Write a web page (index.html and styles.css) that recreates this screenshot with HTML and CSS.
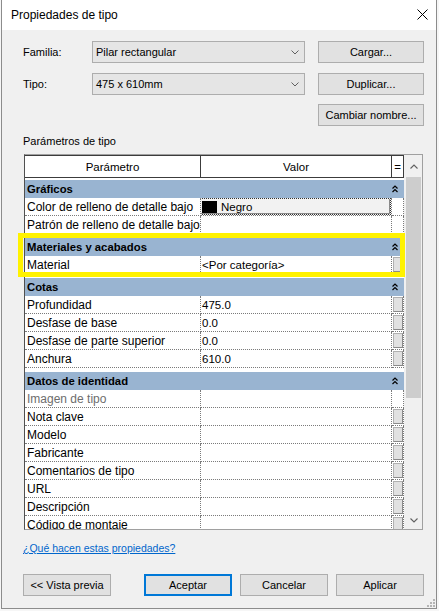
FILE: index.html
```html
<!DOCTYPE html>
<html lang="es">
<head>
<meta charset="utf-8">
<title>Propiedades de tipo</title>
<link rel="stylesheet" href="styles.css">
</head>
<body>
<div class="dialog">
  <div class="titlebar">
    <span class="title">Propiedades de tipo</span>
    <svg class="close" width="11" height="11" viewBox="0 0 11 11"><path d="M0.5 0.5L10.5 10.5M10.5 0.5L0.5 10.5" stroke="#000" stroke-width="1" fill="none"/></svg>
  </div>
  <div class="content">
    <div class="form">
      <div class="label">Familia:</div>
      <div class="combo"><span>Pilar rectangular</span><svg width="8" height="5" viewBox="0 0 8 5"><path d="M0.5 0.5L4 4L7.5 0.5" fill="none" stroke="#606060"/></svg></div>
      <div class="btn">Cargar...</div>
      <div class="label">Tipo:</div>
      <div class="combo"><span>475 x 610mm</span><svg width="8" height="5" viewBox="0 0 8 5"><path d="M0.5 0.5L4 4L7.5 0.5" fill="none" stroke="#606060"/></svg></div>
      <div class="btn">Duplicar...</div>
      <div class="btn third">Cambiar nombre...</div>
    </div>
    <div class="section-label">Parámetros de tipo</div>
    <div class="frame">
      <div class="grid">
        <div class="hdr"><div>Parámetro</div><div>Valor</div><div>=</div></div>

        <div class="group first"><span>Gráficos</span><svg width="6" height="8" viewBox="0 0 6 8"><path d="M0.5 3.5L3 1L5.5 3.5M0.5 7L3 4.5L5.5 7" fill="none" stroke="#000" stroke-width="1.2"/></svg></div>
        <div class="row"><div class="name">Color de relleno de detalle bajo</div><div class="val colorcell"><div class="colorbox"><span class="swatch"></span><span>Negro</span></div></div><div class="eq"></div></div>
        <div class="row"><div class="name">Patrón de relleno de detalle bajo</div><div class="val"></div><div class="eq"></div></div>

        <div class="group"><span>Materiales y acabados</span><svg width="6" height="8" viewBox="0 0 6 8"><path d="M0.5 3.5L3 1L5.5 3.5M0.5 7L3 4.5L5.5 7" fill="none" stroke="#000" stroke-width="1.2"/></svg></div>
        <div class="row"><div class="name">Material</div><div class="val">&lt;Por categoría&gt;</div><div class="eq"><span class="eqbtn"></span></div></div>

        <div class="group"><span>Cotas</span><svg width="6" height="8" viewBox="0 0 6 8"><path d="M0.5 3.5L3 1L5.5 3.5M0.5 7L3 4.5L5.5 7" fill="none" stroke="#000" stroke-width="1.2"/></svg></div>
        <div class="row"><div class="name">Profundidad</div><div class="val">475.0</div><div class="eq"><span class="eqbtn"></span></div></div>
        <div class="row"><div class="name">Desfase de base</div><div class="val">0.0</div><div class="eq"><span class="eqbtn"></span></div></div>
        <div class="row"><div class="name">Desfase de parte superior</div><div class="val">0.0</div><div class="eq"><span class="eqbtn"></span></div></div>
        <div class="row"><div class="name">Anchura</div><div class="val">610.0</div><div class="eq"><span class="eqbtn"></span></div></div>

        <div class="group"><span>Datos de identidad</span><svg width="6" height="8" viewBox="0 0 6 8"><path d="M0.5 3.5L3 1L5.5 3.5M0.5 7L3 4.5L5.5 7" fill="none" stroke="#000" stroke-width="1.2"/></svg></div>
        <div class="row"><div class="name disabled">Imagen de tipo</div><div class="val"></div><div class="eq"></div></div>
        <div class="row"><div class="name">Nota clave</div><div class="val"></div><div class="eq"><span class="eqbtn"></span></div></div>
        <div class="row"><div class="name">Modelo</div><div class="val"></div><div class="eq"><span class="eqbtn"></span></div></div>
        <div class="row"><div class="name">Fabricante</div><div class="val"></div><div class="eq"><span class="eqbtn"></span></div></div>
        <div class="row"><div class="name">Comentarios de tipo</div><div class="val"></div><div class="eq"><span class="eqbtn"></span></div></div>
        <div class="row"><div class="name">URL</div><div class="val"></div><div class="eq"><span class="eqbtn"></span></div></div>
        <div class="row"><div class="name">Descripción</div><div class="val"></div><div class="eq"><span class="eqbtn"></span></div></div>
        <div class="row"><div class="name">Código de montaje</div><div class="val"></div><div class="eq"><span class="eqbtn"></span></div></div>
      </div>
      <div class="scroll">
        <div class="arrow up"><svg width="8" height="5" viewBox="0 0 8 5"><path d="M0.5 4.5L4 1L7.5 4.5" fill="none" stroke="#606060" stroke-width="1.1"/></svg></div>
        <div class="thumb"></div>
        <div class="track"></div>
        <div class="arrow down"><svg width="8" height="5" viewBox="0 0 8 5"><path d="M0.5 0.5L4 4L7.5 0.5" fill="none" stroke="#606060" stroke-width="1.1"/></svg></div>
      </div>
    </div>
    <a class="help">¿Qué hacen estas propiedades?</a>
    <div class="buttons">
      <div class="btn wide first-btn">&lt;&lt; Vista previa</div>
      <div class="btn-group">
        <div class="btn wide default">Aceptar</div>
        <div class="btn wide">Cancelar</div>
        <div class="btn wide">Aplicar</div>
      </div>
    </div>
  </div>
  <div class="highlight"></div>
  <svg class="grip" width="8" height="8" viewBox="0 0 8 8">
    <rect x="6" y="0" width="2" height="2" fill="#b4b4b4"/>
    <rect x="3" y="3" width="2" height="2" fill="#b4b4b4"/>
    <rect x="6" y="3" width="2" height="2" fill="#b4b4b4"/>
    <rect x="0" y="6" width="2" height="2" fill="#b4b4b4"/>
    <rect x="3" y="6" width="2" height="2" fill="#b4b4b4"/>
    <rect x="6" y="6" width="2" height="2" fill="#b4b4b4"/>
  </svg>
</div>
</body>
</html>
```
FILE: styles.css
```css
* { box-sizing: border-box; }
html, body { margin: 0; padding: 0; }
body {
  width: 439px;
  height: 611px;
  overflow: hidden;
  background: #f6f6f6;
  font-family: "Liberation Sans", Arial, sans-serif;
  color: #000;
}
.dialog {
  position: relative;
  margin-left: 1px;
  width: 436px;
  height: 609px;
  border: 1px solid #8c8c8c;
  border-top: none;
  background: #f0f0f0;
  display: flex;
  flex-direction: column;
}
.titlebar {
  height: 30px;
  flex: none;
  background: #fff;
  display: flex;
  align-items: center;
  justify-content: space-between;
  padding: 0 8px 1px 9px;
}
.title { font-size: 12px; }
.content {
  flex: 1;
  padding: 11px 12px 0 20px;
  display: flex;
  flex-direction: column;
}
.form {
  display: grid;
  grid-template-columns: 57px 213px 106px;
  grid-template-rows: 22px 22px 22px;
  column-gap: 13px;
  row-gap: 10px;
}
.label {
  font-size: 11px;
  display: flex;
  align-items: center;
  padding-left: 1px;
}
.combo {
  border: 1px solid #adadad;
  background: #e5e5e5;
  display: flex;
  align-items: center;
  justify-content: space-between;
  padding: 0 5px 0 3px;
  font-size: 11px;
}
.btn {
  border: 1px solid #adadad;
  background: #e1e1e1;
  font-size: 11px;
  display: flex;
  align-items: center;
  justify-content: center;
  height: 22px;
}
.third { grid-column: 3; margin-top: -1px; }
.section-label {
  font-size: 11px;
  line-height: 14px;
  margin-top: 7px;
  padding-left: 1px;
}
.frame {
  margin-top: 6px;
  margin-left: 2px;
  width: 399px;
  height: 376px;
  border: 1px solid #a0a0a0;
  border-left-color: #505050;
  display: flex;
  flex: none;
}
.grid {
  width: 379px;
  height: 100%;
  overflow: hidden;
  background: #fff;
}
.hdr {
  display: grid;
  grid-template-columns: 176px 191px 12px;
  height: 23px;
  border-top: 1px solid #3c3c3c;
  border-bottom: 1px solid #3c3c3c;
  background: #fff;
  font-size: 11.5px;
}
.hdr > div {
  border-right: 1px solid #3c3c3c;
  display: flex;
  align-items: center;
  justify-content: center;
}
.group {
  margin-top: 4px;
  height: 18px;
  background: #99b4d1;
  display: flex;
  align-items: center;
  justify-content: space-between;
  padding: 0 6px 0 2px;
  font-weight: bold;
  font-size: 11.3px;
}
.group.first { margin-top: 2px; }
.row {
  display: grid;
  grid-template-columns: 176px 191px 12px;
  height: 18px;
}
.row > div {
  border-bottom: 1px dotted #7a7a7a;
  border-right: 1px dotted #7a7a7a;
  display: flex;
  align-items: center;
  overflow: hidden;
  white-space: nowrap;
}
.name { padding-left: 2px; font-size: 12px; }
.name.disabled { color: #6d6d6d; }
.val { padding-left: 1px; font-size: 11.5px; }
.val.colorcell { padding-left: 0; }
.colorbox {
  flex: 1;
  height: 100%;
  margin-left: -1px;
  border: 1px dotted #333;
  background: #f2f2f2;
  box-shadow: inset -1px -1px 0 #8a8a8a;
  display: flex;
  align-items: center;
}
.swatch {
  width: 15px;
  height: 12px;
  margin-left: 1px;
  margin-right: 4px;
  background: #000;
}
.eqbtn {
  margin-left: 1px;
  width: 10px;
  height: 15px;
  background: #e1e1e1;
  border: 1px solid #b0b0b0;
  border-right-color: #8a8a8a;
  border-bottom-color: #8a8a8a;
}
.scroll {
  width: 18px;
  background: #f0f0f0;
  display: flex;
  flex-direction: column;
}
.arrow {
  display: flex;
  align-items: center;
  justify-content: center;
}
.arrow.up { height: 22px; padding-left: 1px; }
.arrow.down { height: 17px; padding-left: 1px; }
.thumb {
  height: 221px;
  margin-left: 2px;
  width: 15px;
  background: #cdcdcd;
}
.track { flex: 1; }
.help {
  margin-top: 11px;
  margin-left: 1px;
  font-size: 10.5px;
  line-height: 14px;
  color: #0066cc;
  text-decoration: underline;
  align-self: flex-start;
}
.buttons {
  margin-top: 19px;
  display: flex;
  align-items: center;
}
.btn.wide { width: 88px; }
.first-btn { margin-left: 1px; }
.btn-group {
  margin-left: auto;
  display: flex;
  gap: 8px;
}
.btn.default { border: 2px solid #0078d7; }
.highlight {
  position: absolute;
  left: 16px;
  top: 233px;
  width: 387px;
  height: 44px;
  border: 5px solid #fff200;
}
.grip {
  position: absolute;
  right: 1px;
  bottom: 1px;
}
```
